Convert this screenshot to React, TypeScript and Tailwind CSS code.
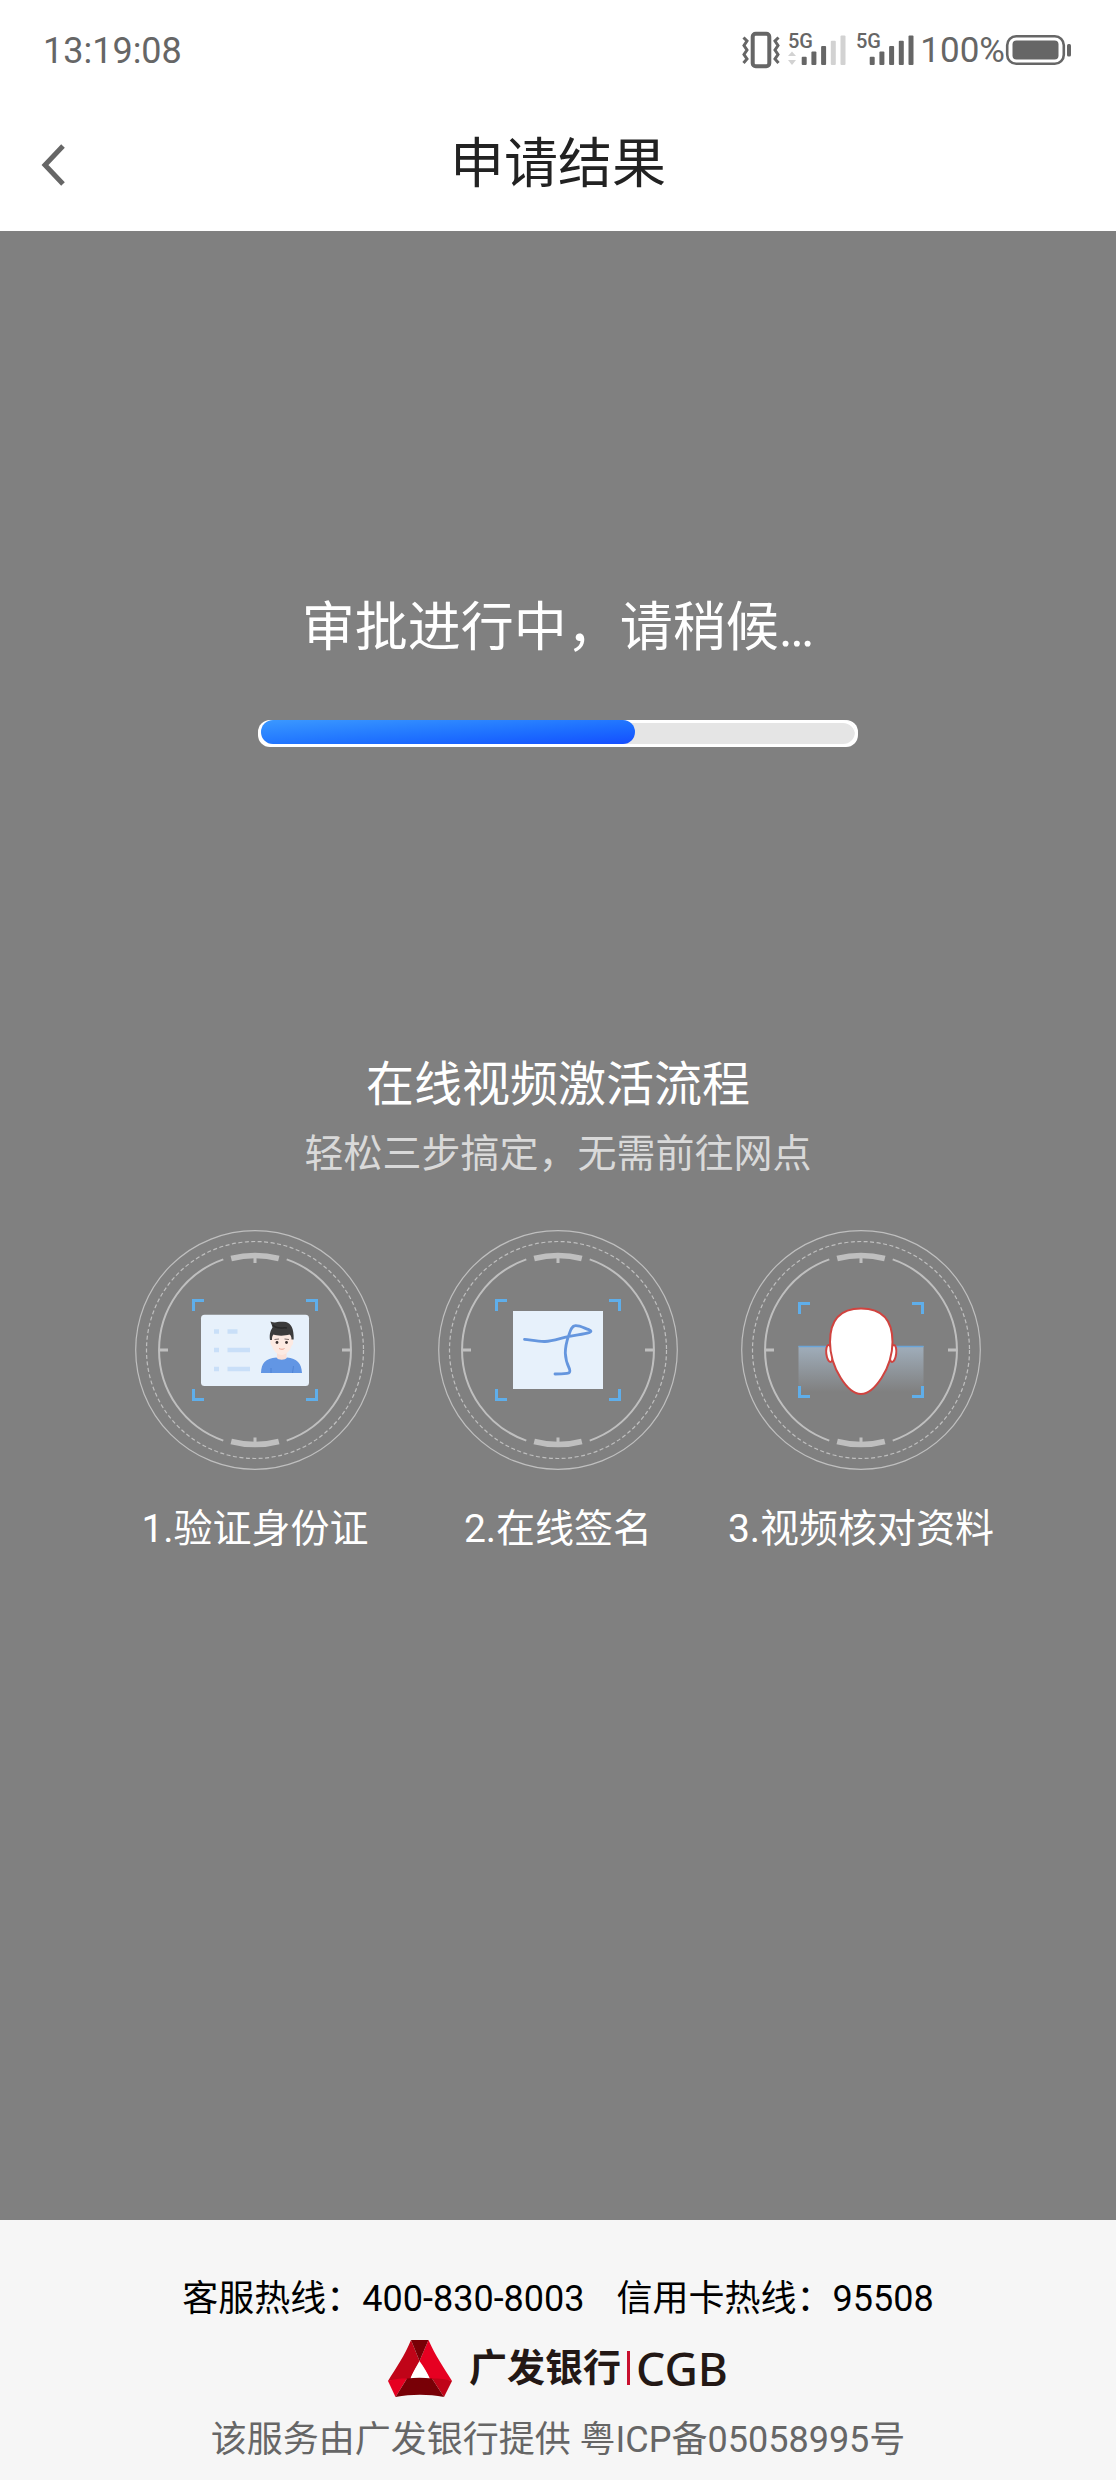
import type { ReactNode } from "react";

const HOTLINES = [
  { label: "客服热线：", number: "400-830-8003" },
  { label: "信用卡热线：", number: "95508" },
];

const SignalIcon = ({ bars, arrows = false }: { bars: number; arrows?: boolean }) => (
  <svg width="58" height="56" viewBox="0 -8 58 56" aria-hidden="true">
    <text x="0" y="17" fontSize="20" fontWeight="500" fill="#666" fontFamily="Roboto, sans-serif">
      5G
    </text>
    {arrows && (
      <g fill="#d2d2d2">
        <path d="M4 20.5L8 25H0z" />
        <path d="M4 34L0 29H8z" />
      </g>
    )}
    {[0, 1, 2, 3, 4].map((i) => (
      <rect
        key={i}
        x={13.7 + i * 9.7}
        y={25.7 - i * 5.3}
        width="5"
        height={8.3 + i * 5.3}
        rx="1"
        fill={i < bars ? "#666" : "#d2d2d2"}
      />
    ))}
  </svg>
);

const VibrateIcon = () => (
  <svg width="38" height="40" viewBox="0 0 38 40" fill="none" stroke="#666" aria-hidden="true">
    <rect x="10.7" y="2.7" width="16.6" height="32.6" rx="3" strokeWidth="4" />
    <path
      d="M1.5 6.5L5 10L2 14.5L5 19L2 23.5L5 28L1.5 32M36.5 6.5L33 10L36 14.5L33 19L36 23.5L33 28L36.5 32"
      strokeWidth="3"
    />
  </svg>
);

const BatteryIcon = () => (
  <svg width="66" height="40" viewBox="0 0 66 40" aria-hidden="true">
    <rect x="2.2" y="5.2" width="56.6" height="27.6" rx="9" fill="none" stroke="#666" strokeWidth="2.6" />
    <rect x="7.5" y="9.5" width="46" height="19" rx="4" fill="#666" />
    <rect x="62" y="13" width="4" height="12.5" rx="1.5" fill="#666" />
  </svg>
);

// Dial shared by the three steps, origin in the middle
const Dial = ({ bracketY, children }: { bracketY: number; children: ReactNode }) => (
  <svg width="242" height="242" viewBox="-121 -121 242 242" fill="none" aria-hidden="true">
    <g stroke="#bfbfbf">
      <circle r="119.3" strokeWidth="1.2" />
      <circle r="108.5" strokeWidth="1.2" strokeDasharray="4 2.5" />
      <path d="M-31.7 -90.6A96 96 0 0 0 -31.7 90.6M31.7 -90.6A96 96 0 0 1 31.7 90.6" strokeWidth="2" />
      <path d="M-23.8 -91.5A94.5 94.5 0 0 1 23.8 -91.5M-23.8 91.5A94.5 94.5 0 0 0 23.8 91.5" strokeWidth="5.5" />
      <path d="M0 -93V-87M0 93V87.5M-96 0H-87M96 0H87" strokeWidth="3" />
    </g>
    {children}
    <g stroke="#5faeea" strokeWidth="3">
      <path d={`M-61.5 ${12 - bracketY}V${1.5 - bracketY}H-51`} />
      <path d={`M61.5 ${12 - bracketY}V${1.5 - bracketY}H51`} />
      <path d={`M-61.5 ${bracketY - 12}V${bracketY - 1.5}H-51`} />
      <path d={`M61.5 ${bracketY - 12}V${bracketY - 1.5}H51`} />
    </g>
  </svg>
);

const IdCardDial = () => (
  <Dial bracketY={51}>
    <rect x="-54" y="-35.3" width="108" height="71.3" rx="3.5" fill="#e7f1fb" />
    <path
      d="M-41 -18.5H-36M-27.5 -18.5H-17.5M-41 0H-36M-27.5 0H-5M-41 19H-36M-27.5 19H-5"
      stroke="#c9dff8"
      strokeWidth="4.5"
    />
    <path d="M22 1H31.5V8.5C30 12 23.5 12 22 8.5z" fill="#fbe0d6" />
    <path d="M6 23C6.5 13 10 8.500 21.5 7.5C23 10.5 30.5 10.5 32 7.5C42 8.5 46.5 13 47 23z" fill="#6296e4" />
    <path d="M16 23V18M37.5 23L38.5 16" stroke="#4a7fd0" strokeWidth="0.8" />
    <path d="M15.5 -11C15 -7 15.5 -5 17 -4C18.500 1.500 23 5 26.7 5C30.5 5 35 1.5 36.5 -4C38 -5 38.5 -7 38 -11L37 -19L17 -19z" fill="#fdeae2" />
    <path
      d="M15 -10C14.5 -14 14.5 -18 17.5 -22.5C17 -25 16 -26.5 15.5 -28.5C17 -28 18.5 -27.5 20 -27.5C22 -28.5 27 -28.5 31 -28C36 -26.5 39 -22 38.7 -10.5H36.5C36.5 -13 36 -14.5 34.5 -15.5C30 -14 22 -14 18.5 -15.5C17 -14 17 -12 17 -10z"
      fill="#3b3b3b"
    />
    <path d="M18 -25C22 -20 28 -23 32 -22" stroke="#292929" strokeWidth="1.5" />
    <path d="M19.5 -10.5L24 -11M29.5 -11L34 -10.5" stroke="#5b4b47" strokeWidth="0.8" />
    <circle cx="22" cy="-7.5" r="1.4" fill="#3a3030" />
    <circle cx="31.5" cy="-7.5" r="1.4" fill="#3a3030" />
    <path d="M24 -1.5C26 -0.5 28 -0.5 29.5 -1.5" stroke="#e9a493" strokeWidth="1" />
  </Dial>
);

const SignatureDial = () => (
  <Dial bracketY={51}>
    <rect x="-45" y="-39" width="90" height="78" fill="#e7f1fb" />
    <path
      d="M-33.5 -10.7C-27 -10 -20 -8.3 -13 -8.5C-5 -9 3 -12 10 -13.3C18 -15 26 -15.7 31 -17.3C34 -18.5 33 -19.5 31 -20.3C26 -22 22 -24.5 17.5 -24.3C13 -24 12.5 -19 10.5 -14C8.5 -8 7.3 -3 7.3 3C7.5 9 9 14 11.5 19C12.5 22 11.5 23 9 23.3C5 23.8 1 24 -3 24"
      stroke="#6596de"
      strokeWidth="2.8"
      strokeLinecap="round"
      strokeLinejoin="round"
    />
  </Dial>
);

const FaceDial = () => (
  <Dial bracketY={48}>
    <defs>
      <linearGradient id="scan" x1="0" y1="0" x2="0" y2="1">
        <stop offset="0" stopColor="#b5cce2" stopOpacity="0.6" />
        <stop offset="1" stopColor="#b5cce2" stopOpacity="0" />
      </linearGradient>
    </defs>
    <rect x="-62.5" y="-4" width="125" height="46" fill="url(#scan)" />
    <path d="M-62.5 -3.5H62.5" stroke="#6ba5d8" strokeWidth="1.3" />
    <g fill="#fff" stroke="#d0433f" strokeWidth="2">
      <ellipse cx="-31.5" cy="3.5" rx="3.2" ry="8.5" transform="rotate(-7 -31.5 3.5)" />
      <ellipse cx="32" cy="3.5" rx="3.2" ry="8.5" transform="rotate(7 32 3.5)" />
      <path d="M0 -41.5C21 -41.5 31.5 -30 31.5 -8C31.5 18 13 44 0 44C-13 44 -31 18 -31 -8C-31 -30 -21 -41.5 0 -41.5z" />
    </g>
  </Dial>
);

const BankMark = () => (
  <svg width="64" height="57" viewBox="0 0 64 57" aria-hidden="true">
    <path d="M23 0L31.5 21C28 27 24 34 22.5 39L0 41C8 28 17 15 23 0z" fill="#c00418" />
    <path d="M40.5 0L31.5 21C36 27 40 34 42 39L64 41C56 28 47 15 40.5 0z" fill="#e60021" />
    <path d="M23 0H40.5L31.5 21z" fill="#780006" />
    <path d="M31.5 22C28 28 24.5 33 22.5 38.5H41.5C39 33 36 28 31.5 22z" fill="#fff" />
    <path d="M0 41C6 39 12 38.5 19 38.5L7.5 57z" fill="#e60021" />
    <path d="M64 41C58 39 51 38.5 44 38.5L56 57z" fill="#c00418" />
    <path d="M19 38.5C27 37.5 36 37.5 44 38.5L56 57C40 54 24 54 7.5 57z" fill="#780006" />
  </svg>
);

const steps = [
  { label: "1.验证身份证", icon: <IdCardDial /> },
  { label: "2.在线签名", icon: <SignatureDial /> },
  { label: "3.视频核对资料", icon: <FaceDial /> },
];

const App = () => {
  const progress = 63;

  return (
    <div className="flex min-h-screen flex-col bg-[#808080] font-[Roboto,'Noto_Sans_CJK_SC',sans-serif]">
      <header className="bg-white">
        {/* Status bar */}
        <div className="flex h-[98px] items-center justify-between pr-[45px] pl-[43px] pt-1 text-[#666]">
          <span className="text-[36px]">13:19:08</span>
          <div className="flex items-center">
            <VibrateIcon />
            <div className="ml-2 flex gap-[10px]">
              <SignalIcon bars={3} arrows />
              <SignalIcon bars={5} />
            </div>
            <span className="ml-[6px] text-[35px] leading-10">100%</span>
            <BatteryIcon />
          </div>
        </div>
        {/* Title bar */}
        <div className="grid h-[133px] grid-cols-[1fr_auto_1fr] items-center px-10">
          <button type="button" aria-label="返回" className="justify-self-start">
            <svg width="28" height="42" viewBox="0 0 28 42" fill="none" stroke="#666" strokeWidth="5">
              <path d="M23 2L5 21L23 40" />
            </svg>
          </button>
          <h1 className="text-[54px] leading-[64px] text-[#222]">申请结果</h1>
        </div>
      </header>

      <main className="flex flex-1 flex-col items-center pt-[365px] text-white">
        <p className="text-[53px] leading-[64px]">审批进行中，请稍候…</p>
        <div
          role="progressbar"
          aria-label="审批进度"
          aria-valuenow={progress}
          className="mt-[60px] w-[600px] max-w-full rounded-[12px] bg-white px-[3px] pb-[3px]"
        >
          <div className="h-6 rounded-[12px] bg-[#e5e5e5] shadow-[inset_0_3px_0_white]">
            <div
              className="h-full rounded-[12px] bg-linear-to-br from-[#3b98ff] to-[#174dff]"
              style={{ width: `${progress}%` }}
            />
          </div>
        </div>

        <h2 className="mt-[306px] text-[48px] leading-[64px]">在线视频激活流程</h2>
        <p className="mt-[9px] text-[39px] leading-[56px] text-[#d9d9d9]">轻松三步搞定，无需前往网点</p>

        <ol className="mt-[47px] grid w-[909px] max-w-full grid-cols-3">
          {steps.map(({ label, icon }) => (
            <li key={label} className="flex flex-col items-center">
              {icon}
              <span className="mt-[30px] text-[39px] leading-[56px] whitespace-nowrap">{label}</span>
            </li>
          ))}
        </ol>
      </main>

      <footer className="flex flex-col items-center bg-[#f6f6f6] pt-[55px] pb-4 text-[36px] leading-[48px]">
        <p className="flex gap-8 text-black">
          {HOTLINES.map(({ label, number }) => (
            <span key={number}>
              {label}
              {number}
            </span>
          ))}
        </p>
        <div className="mt-4 flex h-[58px] items-center text-[#231815]">
          <BankMark />
          <span className="ml-[17px] text-[38px] font-bold">广发银行</span>
          <span className="mx-[6px] h-[34px] w-[3px] bg-[#c8102e]" />
          <span className="font-['Noto_Sans',sans-serif] text-[46px] font-medium">CGB</span>
        </div>
        <p className="mt-[19px] text-[#666]">该服务由广发银行提供 粤ICP备05058995号</p>
      </footer>
    </div>
  );
};

export default App;
